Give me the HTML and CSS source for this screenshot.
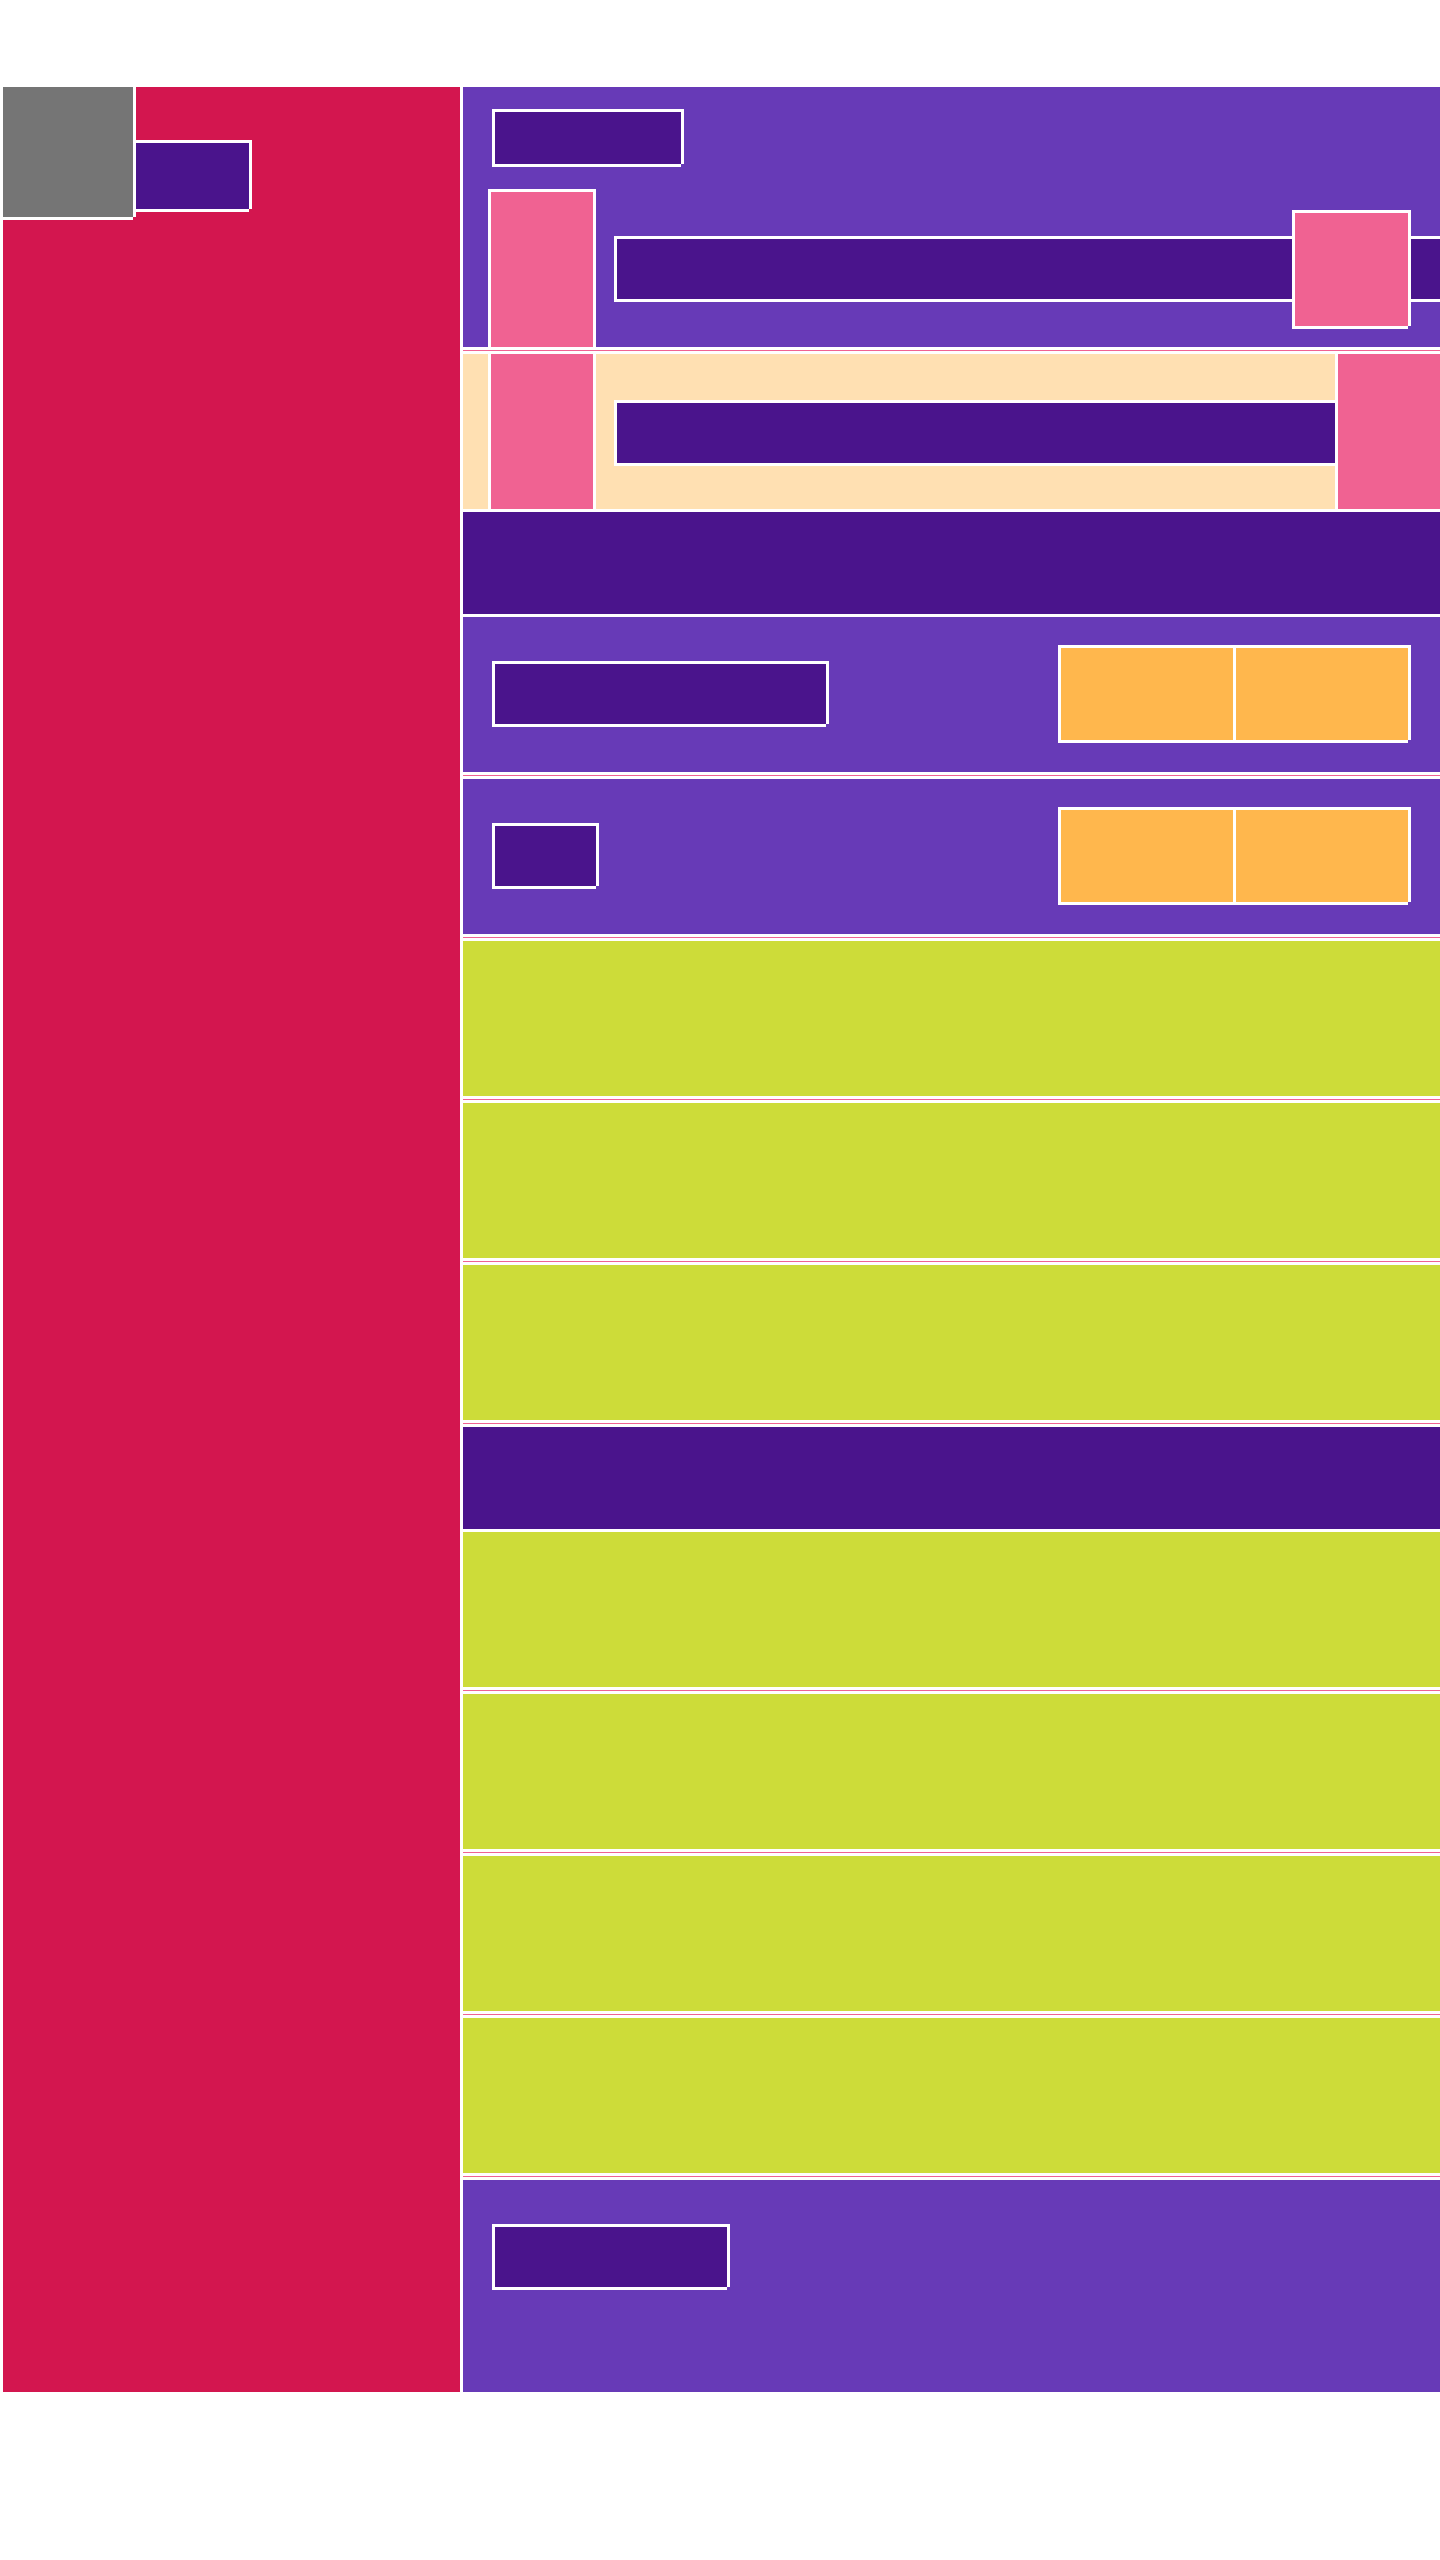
FILE: index.html
```html
<!DOCTYPE html>
<html lang="en">
<head>
    <meta charset="UTF-8">
    <title>Layout</title>
    <meta name="viewport" content="width=device-width, initial-scale=1.0">
    <link rel="stylesheet" href="styles.css">
</head>
<body>
    <div class="page">
        <aside class="sidebar">
            <div class="brand">
                <div class="logo"></div>
                <div class="blk brand-name"></div>
            </div>
        </aside>

        <main class="main">
            <!-- header panel -->
            <section class="panel panel-head">
                <div class="blk title"></div>
                <div class="cols">
                    <div class="col-pink col-top"></div>
                    <div class="blk bar"></div>
                    <div class="blk thumb"></div>
                </div>
            </section>
            <div class="divider"></div>

            <section class="panel panel-cream">
                <div class="col-pink"></div>
                <div class="blk bar bar-fit"></div>
                <div class="col-pink col-end"></div>
            </section>

            <div class="band"></div>

            <section class="panel panel-row">
                <div class="blk label label-wide"></div>
                <div class="blk pair">
                    <div class="pair-cell"></div>
                    <div class="pair-cell"></div>
                </div>
            </section>
            <div class="divider"></div>

            <section class="panel panel-row">
                <div class="blk label label-short"></div>
                <div class="blk pair">
                    <div class="pair-cell"></div>
                    <div class="pair-cell"></div>
                </div>
            </section>
            <div class="divider"></div>

            <section class="panel panel-lime"></section>
            <div class="divider"></div>
            <section class="panel panel-lime"></section>
            <div class="divider"></div>
            <section class="panel panel-lime"></section>
            <div class="divider"></div>

            <div class="band"></div>

            <section class="panel panel-lime"></section>
            <div class="divider"></div>
            <section class="panel panel-lime"></section>
            <div class="divider"></div>
            <section class="panel panel-lime"></section>
            <div class="divider"></div>
            <section class="panel panel-lime"></section>
            <div class="divider"></div>

            <section class="panel panel-foot">
                <div class="blk label label-foot"></div>
            </section>
        </main>
    </div>
</body>
</html>
```

FILE: styles.css
```css
:root {
    --crimson: #d3164f;
    --purple: #673ab7;
    --deep: #4a148c;
    --cream: #ffe0b2;
    --pink: #f06292;
    --orange: #ffb74d;
    --lime: #cddc39;
    --gray: #757575;
    --white: #ffffff;
}

* {
    box-sizing: border-box;
}

body {
    margin: 0;
    background: var(--white);
    font-family: 'Liberation Sans', Arial, sans-serif;
}

.page {
    display: flex;
    gap: 3px;
    padding: 87px 0 0 3px;
}

/* white frame on top/left, offset white edge on right/bottom */
.blk {
    border: solid var(--white);
    border-width: 3px 0 0 3px;
    box-shadow: 3px 0 0 var(--white), 0 3px 0 var(--white);
    margin: 0 3px 3px 0;
    background: var(--deep);
    flex-shrink: 0;
}

.sidebar {
    width: 457px;
    flex-shrink: 0;
    background: var(--crimson);
}

.brand {
    display: flex;
    align-items: flex-start;
}

.logo {
    width: 130px;
    height: 130px;
    background: var(--gray);
    box-shadow: 3px 0 0 var(--white), 0 3px 0 var(--white);
}

.brand-name {
    width: 116px;
    height: 69px;
    margin-top: 53px;
}

.main {
    flex: 1;
    display: flex;
    flex-direction: column;
    gap: 3px;
}

.divider {
    height: 1px;
    background: var(--pink);
}

.band {
    height: 102px;
    background: var(--deep);
}

.panel {
    height: 155px;
}

.panel-head {
    height: 260px;
    padding-top: 22px;
    background: var(--purple);
}

.title {
    width: 189px;
    height: 55px;
    margin: 0 0 25px 29px;
}

.cols {
    position: relative;
    display: flex;
    align-items: center;
    height: 158px;
    padding-left: 25px;
}

.col-pink {
    flex: 0 0 108px;
    align-self: stretch;
    background: var(--pink);
    border: solid var(--white);
    border-width: 0 3px;
}
.col-top {
    border-top-width: 3px;
}
.col-end {
    flex-basis: 105px;
    border-right-width: 0;
}

.bar {
    flex: 1;
    height: 63px;
    margin: 2px 0 3px 18px;
}
.bar-fit {
    margin-top: 3px;
}

.thumb {
    position: absolute;
    top: 21px;
    right: 32px;
    width: 116px;
    height: 116px;
    margin: 0;
    background: var(--pink);
}

.panel-cream {
    display: flex;
    align-items: center;
    padding-left: 25px;
    background: var(--cream);
}

.panel-row {
    display: flex;
    align-items: center;
    justify-content: space-between;
    padding: 0 29px 1px;
    background: var(--purple);
}

.label {
    height: 63px;
}
.label-wide {
    width: 334px;
}
.label-short {
    width: 104px;
}
.label-foot {
    width: 235px;
}

.pair {
    display: flex;
    width: 350px;
    height: 95px;
    background: var(--orange);
}

.pair-cell {
    flex: 1;
    background: var(--orange);
}
.pair-cell + .pair-cell {
    border-left: 3px solid var(--white);
}

.panel-lime {
    background: var(--lime);
}

.panel-foot {
    height: 212px;
    padding: 44px 29px 0;
    background: var(--purple);
}
```
